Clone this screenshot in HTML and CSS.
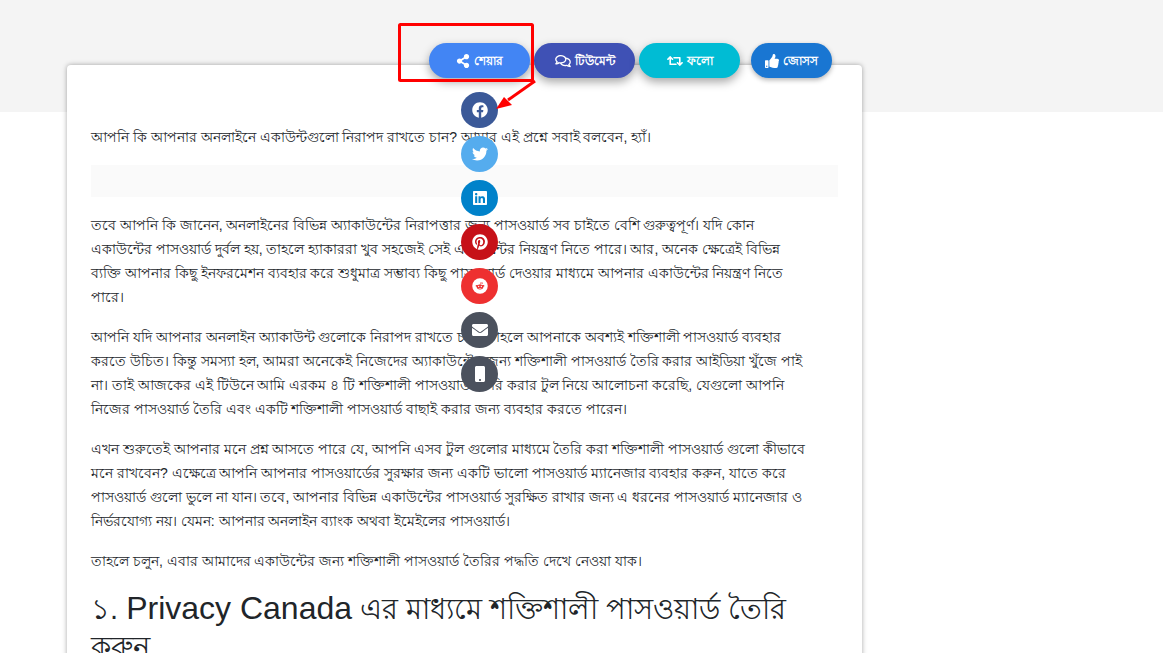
FILE: index.html
```
<!DOCTYPE html>
<html lang="bn">
<head>
<meta charset="UTF-8">
<meta name="viewport" content="width=device-width, initial-scale=1.0">
<title>শক্তিশালী পাসওয়ার্ড তৈরি করার টুল</title>
<link rel="stylesheet" href="styles.css">
</head>
<body>

<div class="hero"></div>

<main class="layout">
<article class="card">

  <div class="actions">
    <div class="share">
      <button type="button" class="pill share-btn">
        <svg class="icon" viewBox="0 0 448 512"><path d="M352 320c-22.6 0-43.400 7.800-59.800 20.900l-102.500-64.100a96.600 96.600 0 0 0 0-41.700l102.500-64.100C308.600 184.200 329.400 192 352 192c53 0 96-43 96-96S405 0 352 0s-96 43-96 96c0 7.200.8 14.100 2.300 20.800l-102.500 64.100C139.400 167.800 118.600 160 96 160c-53 0-96 43-96 96s43 96 96 96c22.600 0 43.400-7.800 59.800-20.900l102.500 64.100A96.300 96.300 0 0 0 256 416c0 53 43 96 96 96s96-43 96-96-43-96-96-96z"/></svg>
        শেয়ার
      </button>
      <a class="round facebook" href="#" aria-label="Facebook"><svg viewBox="0 0 512 512"><path d="M504 256C504 119 393 8 256 8S8 119 8 256c0 123.800 90.700 226.400 209.300 245V327.700h-63V256h63v-54.600c0-62.200 37-96.500 93.700-96.500 27.100 0 55.500 4.800 55.500 4.800v61h-31.300c-30.800 0-40.400 19.100-40.400 38.700V256h68.800l-11 71.700h-57.800V501C413.300 482.400 504 379.800 504 256z"/></svg></a>
      <a class="round twitter" href="#" aria-label="Twitter"><svg viewBox="0 0 512 512"><path d="M459.400 151.700c.3 4.500.3 9.100.3 13.600 0 138.700-105.600 298.600-298.600 298.600-59.500 0-114.700-17.200-161.100-47.100 8.400 1 16.600 1.300 25.300 1.300 49.100 0 94.200-16.600 130.300-44.800-46.100-1-84.800-31.200-98.100-72.800 6.500 1 13 1.600 19.800 1.600 9.400 0 18.800-1.300 27.600-3.600-48.100-9.700-84.100-52-84.100-103v-1.300c14 7.800 30.200 12.700 47.400 13.300-28.300-18.800-46.800-51-46.800-87.400 0-19.500 5.200-37.400 14.300-53 51.700 63.700 129.300 105.300 216.400 109.800-1.600-7.800-2.600-15.900-2.600-24 0-57.800 46.800-104.900 104.900-104.900 30.200 0 57.500 12.700 76.700 33.100 23.700-4.500 46.500-13.300 66.600-25.300-7.800 24.400-24.400 44.800-46.100 57.800 21.100-2.300 41.600-8.100 60.400-16.200-14.300 20.800-32.200 39.300-52.600 54.300z"/></svg></a>
      <a class="round linkedin" href="#" aria-label="LinkedIn"><svg viewBox="0 0 448 512"><path d="M416 32H31.900C14.300 32 0 46.500 0 64.300v383.400C0 465.500 14.300 480 31.900 480H416c17.600 0 32-14.500 32-32.300V64.300c0-17.800-14.400-32.300-32-32.300zM135.400 416H69V202.200h66.500V416zm-33.200-243c-21.300 0-38.500-17.300-38.500-38.500S80.900 96 102.200 96c21.200 0 38.500 17.300 38.500 38.500 0 21.300-17.200 38.500-38.500 38.500zm282.100 243h-66.400V312c0-24.800-.5-56.700-34.500-56.700-34.600 0-39.900 27-39.900 54.900V416h-66.400V202.200h63.700v29.200h.9c8.900-16.800 30.600-34.500 62.900-34.500 67.200 0 79.700 44.300 79.700 101.900V416z"/></svg></a>
      <a class="round pinterest" href="#" aria-label="Pinterest"><svg viewBox="0 0 496 512"><path d="M496 256c0 137-111 248-248 248-25.600 0-50.200-3.900-73.400-11.100 10.100-16.500 25.200-43.500 30.800-65 3-11.600 15.400-59 15.400-59 8.100 15.400 31.700 28.500 56.800 28.500 74.800 0 128.700-68.800 128.700-154.300 0-81.900-66.900-143.200-152.900-143.200-107 0-163.900 71.800-163.900 150.100 0 36.400 19.400 81.700 50.300 96.100 4.700 2.200 7.200 1.200 8.300-3.300.8-3.400 5-20.300 6.900-28.100.6-2.500.3-4.700-1.700-7.100-10.100-12.500-18.300-35.300-18.300-56.600 0-54.700 41.400-107.600 112-107.600 60.900 0 103.600 41.500 103.600 100.900 0 67.100-33.900 113.600-78 113.600-24.300 0-42.600-20.100-36.700-44.800 7-29.500 20.500-61.300 20.500-82.600 0-19-10.200-34.900-31.400-34.900-24.900 0-44.900 25.700-44.900 60.200 0 22 7.400 36.800 7.400 36.800s-24.500 103.800-29 123.200c-5 21.400-3 51.600-.9 71.200C65.400 450.900 0 361.100 0 256 0 119 111 8 248 8s248 111 248 248z"/></svg></a>
      <a class="round reddit" href="#" aria-label="Reddit"><svg viewBox="0 0 512 512"><circle cx="256" cy="256" r="248"/><g class="cut"><ellipse cx="256" cy="286" rx="106" ry="78"/><circle cx="146" cy="250" r="30"/><circle cx="366" cy="250" r="30"/><path d="M246 220l20-80 60 14-4 18-44-10-14 58z"/><circle cx="328" cy="162" r="20"/></g><circle cx="214" cy="268" r="21"/><circle cx="298" cy="268" r="21"/><path d="M208 310c26 20 70 20 96 0l8 12c-30 28-82 28-112 0z"/></svg></a>
      <a class="round dark" href="#" aria-label="Email"><svg viewBox="0 0 512 512"><path d="M502.300 190.800c3.900-3.100 9.700-.2 9.700 4.700V400c0 26.500-21.500 48-48 48H48c-26.500 0-48-21.500-48-48V195.600c0-5 5.700-7.800 9.700-4.700 22.400 17.400 52.100 39.500 154.100 113.600 21.100 15.400 56.700 47.800 92.200 47.600 35.700.3 72-32.800 92.300-47.600 102-74.100 131.600-96.300 154-113.700zM256 320c23.200.4 56.600-29.200 73.400-41.400 132.700-96.300 142.800-104.700 173.400-128.700 5.800-4.500 9.200-11.500 9.200-18.900v-19c0-26.500-21.500-48-48-48H48c-26.500 0-48 21.500-48 48v19c0 7.400 3.400 14.300 9.200 18.900 30.600 23.900 40.700 32.400 173.400 128.700 16.800 12.200 50.200 41.800 73.400 41.400z"/></svg></a>
      <a class="round dark" href="#" aria-label="Mobile"><svg viewBox="0 0 320 512"><path d="M272 0H48C21.500 0 0 21.500 0 48v416c0 26.500 21.500 48 48 48h224c26.500 0 48-21.500 48-48V48c0-26.500-21.500-48-48-48zM160 480c-17.700 0-32-14.300-32-32s14.300-32 32-32 32 14.300 32 32-14.300 32-32 32z"/></svg></a>

      <!-- red frame and arrow pointing at the share menu -->
      <svg class="marker" viewBox="0 0 140 92">
        <rect x="1.500" y="2.500" width="133" height="56" rx="1" fill="none" stroke="#f00" stroke-width="3"/>
        <path d="M137 59L110 78" stroke="#f00" stroke-width="3"/>
        <path d="M98 87L106 75L114 83Z" fill="#f00"/>
      </svg>
    </div>
    <button type="button" class="pill comment-btn">
      <svg class="icon wide" viewBox="0 0 576 512"><path d="M532 386.200c27.500-27.100 44-61.100 44-98.200 0-80-76.500-146.100-176.200-157.900C368.300 72.500 294.300 32 208 32 93.100 32 0 103.600 0 192c0 37 16.500 71 44 98.200-15.300 30.700-37.300 54.500-37.700 54.900-6.300 6.700-8.100 16.500-4.400 25 3.600 8.500 12 14 21.200 14 53.500 0 96.700-20.200 125.200-38.800 9.200 2.100 18.700 3.700 28.400 4.900C208.100 407.600 281.800 448 368 448c20.800 0 40.800-2.400 59.800-6.800C456.300 459.700 499.400 480 553 480c9.200 0 17.500-5.500 21.200-14 3.600-8.500 1.900-18.300-4.400-25-.4-.3-22.500-24.100-37.800-54.800zm-392.800-92.300L122.100 305c-14.100 9.100-28.500 16.300-43.100 21.400 2.700-4.700 5.400-9.700 8-14.800l15.500-31.100L77.700 256C64.200 242.600 48 220.700 48 192c0-60.700 73.300-112 160-112s160 51.300 160 112-73.300 112-160 112c-16.500 0-33-1.900-49-5.600l-19.800-4.500zM498.300 352l-24.700 24.400 15.500 31.100c2.600 5.100 5.300 10.100 8 14.800-14.600-5.100-29-12.300-43.100-21.400l-17.100-11.100-19.900 4.600c-16 3.700-32.500 5.600-49 5.600-54 0-102.200-20.100-131.300-49.700C338 339.500 416 272.900 416 192c0-3.400-.4-6.700-.7-10C479.700 196.500 528 238.800 528 288c0 28.700-16.200 50.600-29.700 64z"/></svg>
      টিউমেন্ট
    </button>
    <button type="button" class="pill follow-btn">
      <svg class="icon wide" viewBox="0 0 640 512"><path d="M629.700 343.600L529 444.300c-9.400 9.400-24.600 9.400-33.900 0L394.300 343.600c-9.400-9.400-9.400-24.600 0-33.900l10.800-10.800c9.600-9.600 25.100-9.300 34.400.5L480 342.100V160H292.500a24 24 0 0 1-17-7l-16-16C244.400 121.900 255.100 96 276.500 96H520c13.300 0 24 10.700 24 24v222.100l40.400-42.800c9.300-9.800 24.900-10.100 34.400-.5l10.800 10.800c9.500 9.400 9.500 24.600.1 34zm-265.100 15.400A24 24 0 0 0 347.500 352H160V169.900l40.400 42.800c9.300 9.800 24.900 10.100 34.400.5l10.800-10.800c9.400-9.400 9.400-24.600 0-33.900L145 67.700c-9.400-9.400-24.600-9.400-33.900 0L10.300 168.400c-9.400 9.400-9.400 24.600 0 33.900l10.800 10.800c9.600 9.600 25.100 9.300 34.400-.5L96 169.900V392c0 13.300 10.700 24 24 24h243.500c21.400 0 32.100-25.900 17-41z"/></svg>
      ফলো
    </button>
    <button type="button" class="pill like-btn">
      <svg class="icon" viewBox="0 0 512 512"><path d="M104 224H24c-13.300 0-24 10.700-24 24v240c0 13.300 10.700 24 24 24h80c13.300 0 24-10.700 24-24V248c0-13.300-10.700-24-24-24zM64 472c-13.300 0-24-10.700-24-24s10.700-24 24-24 24 10.700 24 24-10.700 24-24 24zM384 81.500c0 42.400-26 66.200-33.300 94.500h101.700c33.400 0 59.400 27.700 59.600 58.100.1 17.900-7.500 37.200-19.400 49.200 9.900 23.400 8.200 56.300-9.400 79.800 8.700 25.900-.1 57.700-16.400 74.800 4.300 17.600 2.200 32.600-6.100 44.600C440.200 511.600 389.600 512 346.800 512h-2.800c-48.300 0-87.800-17.600-119.600-31.700-16-7.100-36.800-15.900-52.700-16.200-6.500-.1-11.800-5.500-11.800-12V238.300c0-3.200 1.300-6.300 3.600-8.500 39.600-39.100 56.600-80.600 89.100-113.100 14.800-14.800 20.200-37.200 25.400-58.900C282.500 39.300 291.800 0 312 0c24 0 72 8 72 81.500z"/></svg>
      জোসস
    </button>
  </div>

  <p>আপনি কি আপনার অনলাইনে একাউন্টগুলো নিরাপদ রাখতে চান? আমার এই প্রশ্নে সবাই বলবেন, হ্যাঁ।</p>

  <div class="ad"></div>

  <p>তবে আপনি কি জানেন, অনলাইনের বিভিন্ন অ্যাকাউন্টের নিরাপত্তার জন্য পাসওয়ার্ড সব চাইতে বেশি গুরুত্বপূর্ণ। যদি কোন<br>
  একাউন্টের পাসওয়ার্ড দুর্বল হয়, তাহলে হ্যাকাররা খুব সহজেই সেই একাউন্টের নিয়ন্ত্রণ নিতে পারে। আর, অনেক ক্ষেত্রেই বিভিন্ন<br>
  ব্যক্তি আপনার কিছু ইনফরমেশন ব্যবহার করে শুধুমাত্র সম্ভাব্য কিছু পাসওয়ার্ড দেওয়ার মাধ্যমে আপনার একাউন্টের নিয়ন্ত্রণ নিতে<br>
  পারে।</p>

  <p>আপনি যদি আপনার অনলাইন অ্যাকাউন্ট গুলোকে নিরাপদ রাখতে চান, তাহলে আপনাকে অবশ্যই শক্তিশালী পাসওয়ার্ড ব্যবহার<br>
  করতে উচিত। কিন্তু সমস্যা হল, আমরা অনেকেই নিজেদের অ্যাকাউন্টের জন্য শক্তিশালী পাসওয়ার্ড তৈরি করার আইডিয়া খুঁজে পাই<br>
  না। তাই আজকের এই টিউনে আমি এরকম ৪ টি শক্তিশালী পাসওয়ার্ড তৈরি করার টুল নিয়ে আলোচনা করেছি, যেগুলো আপনি<br>
  নিজের পাসওয়ার্ড তৈরি এবং একটি শক্তিশালী পাসওয়ার্ড বাছাই করার জন্য ব্যবহার করতে পারেন।</p>

  <p>এখন শুরুতেই আপনার মনে প্রশ্ন আসতে পারে যে, আপনি এসব টুল গুলোর মাধ্যমে তৈরি করা শক্তিশালী পাসওয়ার্ড গুলো কীভাবে<br>
  মনে রাখবেন? এক্ষেত্রে আপনি আপনার পাসওয়ার্ডের সুরক্ষার জন্য একটি ভালো পাসওয়ার্ড ম্যানেজার ব্যবহার করুন, যাতে করে<br>
  পাসওয়ার্ড গুলো ভুলে না যান। তবে, আপনার বিভিন্ন একাউন্টের পাসওয়ার্ড সুরক্ষিত রাখার জন্য এ ধরনের পাসওয়ার্ড ম্যানেজার ও<br>
  নির্ভরযোগ্য নয়। যেমন: আপনার অনলাইন ব্যাংক অথবা ইমেইলের পাসওয়ার্ড।</p>

  <p>তাহলে চলুন, এবার আমাদের একাউন্টের জন্য শক্তিশালী পাসওয়ার্ড তৈরির পদ্ধতি দেখে নেওয়া যাক।</p>

  <h2>১. <span class="en">Privacy Canada</span> এর মাধ্যমে শক্তিশালী পাসওয়ার্ড তৈরি করুন</h2>

</article>
</main>

</body>
</html>
```
FILE: styles.css
```
html, body { height: 100%; margin: 0; padding: 0; }
body { font-family: "Liberation Sans", Arial, sans-serif; font-size: 14px; line-height: 24px; color: #212529; background: #fff; overflow: hidden; }
.hero { height: 112px; background: #f4f4f4; }
.layout { display: grid; grid-template-columns: minmax(0, 1fr) 234px; padding: 0 67px; margin-top: -47px; }
.card { position: relative; background: #fff; padding: 60px 24px 24px; border-radius: 4px; box-shadow: 0 0 5px rgba(0,0,0,0.35); }
p { margin: 0 0 16px; }
.ad { height: 32px; margin-bottom: 16px; background: #fafafa; }
h2 { margin: 0; font-size: 29px; line-height: 38px; font-weight: 400; }
h2 .en { font-size: 32px; }

/* floating buttons over the top edge of the card */
.actions { position: absolute; top: -22px; right: 30px; display: flex; align-items: flex-start; gap: 4px; }
.share { position: relative; display: flex; flex-direction: column; align-items: center; gap: 8px; }
.pill { display: flex; align-items: center; justify-content: center; gap: 4px; width: 101px; height: 35px; padding: 0; border: none; border-radius: 18px; color: #fff; font-family: inherit; font-size: 12px; font-weight: bold; line-height: 20px; cursor: pointer; box-shadow: 0 4px 10px rgba(0,0,0,0.35); }
.share-btn { background: #4285f4; margin-bottom: 6px; }
.comment-btn { background: #3f51b5; }
.follow-btn { background: #00bcd4; }
.like-btn { width: 81px; margin-left: 7px; background: #1976d2; box-shadow: 0 2px 5px rgba(0,0,0,0.3); }
.icon { width: 14px; height: 14px; fill: currentColor; }
.icon.wide { width: 16px; }
.round { display: flex; align-items: center; justify-content: center; width: 37px; height: 36px; border-radius: 50%; }
.round svg { width: 16px; height: 16px; fill: #fff; }
.round .cut { fill: #ee3030; }
.facebook { background: #3b5998; }
.twitter { background: #55acee; }
.linkedin { background: #0082ca; }
.pinterest { background: #c61118; }
.reddit { background: #ee3030; }
.dark { background: #4b515d; }
.marker { position: absolute; left: -31px; top: -21px; width: 140px; height: 92px; z-index: 1; pointer-events: none; }
```
